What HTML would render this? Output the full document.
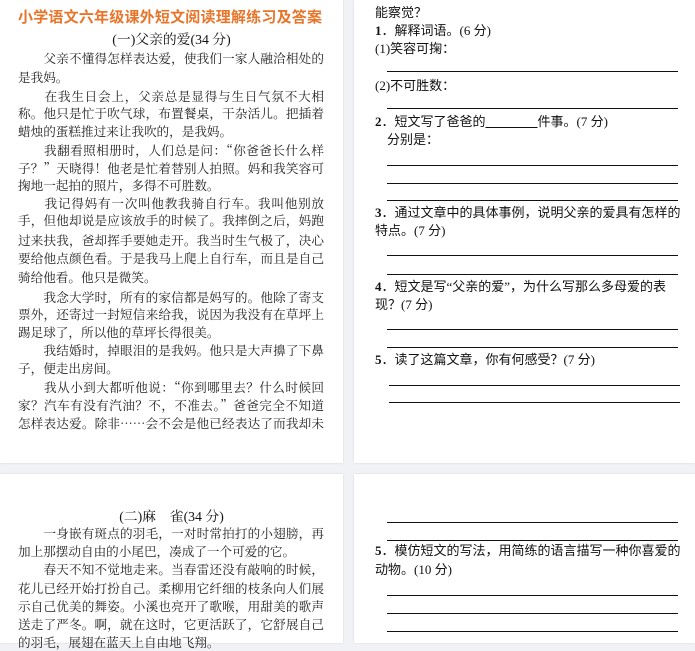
<!DOCTYPE html>
<html><head><meta charset="utf-8"><style>
*{margin:0;padding:0;box-sizing:border-box}
body{width:695px;height:643px;background:#f1f2f6;position:relative;overflow:hidden;font-family:"Liberation Serif","Noto Serif CJK SC",serif;color:#111}
.pg{position:absolute;background:#fff;box-shadow:0 0 2px rgba(0,0,0,.12)}
.t{position:absolute;white-space:nowrap;font-size:13.8px;line-height:18px;height:18px}
.c{font-family:"Noto Serif CJK SC",serif;font-size:12.6px;color:#222}
.j{width:306px;text-align:justify;text-align-last:justify}
.q{font-family:"Liberation Serif","Noto Sans CJK SC",sans-serif;font-size:13px}
.u{position:absolute;height:1px;background:#111;left:387px;width:291px}
</style></head><body>
<div class="pg" style="left:0;top:0;width:343px;height:463px"></div>
<div class="pg" style="left:354px;top:0;width:341px;height:463px"></div>
<div class="pg" style="left:0;top:474px;width:343px;height:169px"></div>
<div class="pg" style="left:354px;top:474px;width:341px;height:169px"></div>

<div class="t j" style="left:18px;top:8px;width:304px;font-size:15px;font-weight:bold;color:#e8752a;font-family:'Liberation Sans','Noto Sans CJK SC',sans-serif;line-height:20px;height:20px">小学语文六年级课外短文阅读理解练习及答案</div>
<div class="t" style="left:0;width:343px;text-align:center;top:31px">(一)父亲的爱(34 分)</div>
<div class="t c j" style="left:18px;top:49px">　　父亲不懂得怎样表达爱，使我们一家人融洽相处的</div>
<div class="t c" style="left:18px;top:68px">是我妈。</div>
<div class="t c j" style="left:18px;top:87px">　　在我生日会上，父亲总是显得与生日气氛不大相</div>
<div class="t c j" style="left:18px;top:104px">称。他只是忙于吹气球，布置餐桌，干杂活儿。把插着</div>
<div class="t c" style="left:18px;top:122px">蜡烛的蛋糕推过来让我吹的，是我妈。</div>
<div class="t c j" style="left:18px;top:141px">　　我翻看照相册时，人们总是问：“你爸爸长什么样</div>
<div class="t c j" style="left:18px;top:159px">子？”天晓得！他老是忙着替别人拍照。妈和我笑容可</div>
<div class="t c" style="left:18px;top:176px">掬地一起拍的照片，多得不可胜数。</div>
<div class="t c j" style="left:18px;top:194px">　　我记得妈有一次叫他教我骑自行车。我叫他别放</div>
<div class="t c j" style="left:18px;top:211px">手，但他却说是应该放手的时候了。我摔倒之后，妈跑</div>
<div class="t c j" style="left:18px;top:231px">过来扶我，爸却挥手要她走开。我当时生气极了，决心</div>
<div class="t c j" style="left:18px;top:249px">要给他点颜色看。于是我马上爬上自行车，而且是自己</div>
<div class="t c" style="left:18px;top:268px">骑给他看。他只是微笑。</div>
<div class="t c j" style="left:18px;top:288px">　　我念大学时，所有的家信都是妈写的。他除了寄支</div>
<div class="t c j" style="left:18px;top:305px">票外，还寄过一封短信来给我，说因为我没有在草坪上</div>
<div class="t c" style="left:18px;top:323px">踢足球了，所以他的草坪长得很美。</div>
<div class="t c j" style="left:18px;top:341px">　　我结婚时，掉眼泪的是我妈。他只是大声擤了下鼻</div>
<div class="t c" style="left:18px;top:359px">子，便走出房间。</div>
<div class="t c j" style="left:18px;top:378px">　　我从小到大都听他说：“你到哪里去？什么时候回</div>
<div class="t c j" style="left:18px;top:396px">家？汽车有没有汽油？不，不准去。”爸爸完全不知道</div>
<div class="t c j" style="left:18px;top:414px">怎样表达爱。除非……会不会是他已经表达了而我却未</div>

<div class="t q" style="left:375px;top:4px">能察觉？</div>
<div class="t q" style="left:375px;top:22px"><b>1</b>．解释词语。(6 分)</div>
<div class="t q" style="left:375px;top:40px">(1)笑容可掬：</div>
<div class="u" style="top:71px"></div>
<div class="t q" style="left:375px;top:77px">(2)不可胜数：</div>
<div class="u" style="top:108px"></div>
<div class="t q" style="left:375px;top:113px"><b>2</b>．短文写了爸爸的<span style="text-decoration:underline">　　　　</span>件事。(7 分)</div>
<div class="t q" style="left:387px;top:131px">分别是：</div>
<div class="u" style="top:165px"></div>
<div class="u" style="top:183px"></div>
<div class="u" style="top:200px"></div>
<div class="t q" style="left:375px;top:204px"><b>3</b>．通过文章中的具体事例，说明父亲的爱具有怎样的</div>
<div class="t q" style="left:375px;top:222px">特点。(7 分)</div>
<div class="u" style="top:255px"></div>
<div class="u" style="top:274px"></div>
<div class="t q" style="left:375px;top:278px"><b>4</b>．短文是写“父亲的爱”，为什么写那么多母爱的表</div>
<div class="t q" style="left:375px;top:296px">现？(7 分)</div>
<div class="u" style="top:329px"></div>
<div class="u" style="top:347px"></div>
<div class="t q" style="left:375px;top:351px"><b>5</b>．读了这篇文章，你有何感受？(7 分)</div>
<div class="u" style="top:385px;left:389px"></div>
<div class="u" style="top:402px;left:389px"></div>

<div class="t" style="left:0;width:343px;text-align:center;top:508px">(二)麻　雀(34 分)</div>
<div class="t c j" style="left:18px;top:524px">　　一身嵌有斑点的羽毛，一对时常拍打的小翅膀，再</div>
<div class="t c" style="left:18px;top:542px">加上那摆动自由的小尾巴，凑成了一个可爱的它。</div>
<div class="t c j" style="left:18px;top:560px">　　春天不知不觉地走来。当春雷还没有敲响的时候，</div>
<div class="t c j" style="left:18px;top:579px">花儿已经开始打扮自己。柔柳用它纤细的枝条向人们展</div>
<div class="t c j" style="left:18px;top:597px">示自己优美的舞姿。小溪也亮开了歌喉，用甜美的歌声</div>
<div class="t c j" style="left:18px;top:615px">送走了严冬。啊，就在这时，它更活跃了，它舒展自己</div>
<div class="t c" style="left:18px;top:633px">的羽毛，展翅在蓝天上自由地飞翔。</div>

<div class="u" style="top:522px"></div>
<div class="u" style="top:540px"></div>
<div class="t q" style="left:375px;top:542px"><b>5</b>．模仿短文的写法，用简练的语言描写一种你喜爱的</div>
<div class="t q" style="left:375px;top:561px">动物。(10 分)</div>
<div class="u" style="top:595px"></div>
<div class="u" style="top:613px"></div>
<div class="u" style="top:631px"></div>
</body></html>
